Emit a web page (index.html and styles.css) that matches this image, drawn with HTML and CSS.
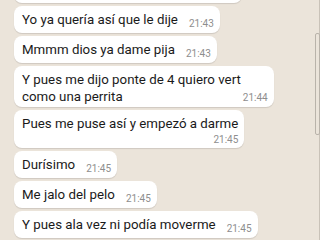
FILE: index.html
```html
<!DOCTYPE html>
<html lang="es">
<head>
    <meta charset="UTF-8">
    <meta name="viewport" content="width=device-width, initial-scale=1.0">
    <title>Chat</title>
    <link rel="stylesheet" href="styles.css">
</head>
<body>
    <div class="chat">
        <div class="bubble cut"></div>

        <div class="bubble">
            <span class="text">Yo ya quería así que le dije</span>
            <span class="time">21:43</span>
        </div>
        <div class="bubble">
            <span class="text">Mmmm dios ya dame pija</span>
            <span class="time">21:43</span>
        </div>
        <div class="bubble tight">
            <span class="text">Y pues me dijo ponte de 4 quiero vert<br>como una perrita</span>
            <span class="time">21:44</span>
        </div>
        <div class="bubble stack">
            <span class="text">Pues me puse así y empezó a darme</span>
            <span class="time">21:45</span>
        </div>
        <div class="bubble">
            <span class="text">Durísimo</span>
            <span class="time">21:45</span>
        </div>
        <div class="bubble">
            <span class="text">Me jalo del pelo</span>
            <span class="time">21:45</span>
        </div>
        <div class="bubble">
            <span class="text">Y pues ala vez ni podía moverme</span>
            <span class="time">21:45</span>
        </div>
    </div>

    <div class="scroll-thumb"></div>
</body>
</html>
```

FILE: styles.css
```css
html, body {
    height: 100%;
}
body {
    margin: 0;
    overflow: hidden;
    background-color: #ebe4da;
    font-family: Roboto, "Noto Sans", Arial, sans-serif;
    color: #1a1a1a;
    box-shadow: inset -1px 0 0 #c9c2b8;
}
.chat {
    display: flex;
    flex-direction: column;
    align-items: flex-start;
    gap: 3px;
    padding-left: 14px;
    margin-top: -24px;
}
.bubble {
    display: flex;
    align-items: flex-end;
    gap: 11px;
    background-color: #fff;
    border-radius: 8px;
    padding: 5px 6px 5px 8px;
    box-shadow: 0 1px 1px rgba(0, 0, 0, 0.12);
}
.bubble.cut {
    width: 214px;
    height: 17px;
}
.bubble.tight {
    gap: 2px;
    padding-bottom: 2px;
}
.bubble.stack {
    display: block;
    padding-bottom: 2px;
}
.text {
    font-size: 13.3px;
    line-height: 17px;
}
.time {
    font-size: 10px;
    line-height: 12px;
    color: #8e8e8e;
    margin-bottom: -2px;
    white-space: nowrap;
}
.tight .time {
    margin-bottom: 1px;
}
.stack .text {
    display: block;
}
.stack .time {
    display: block;
    text-align: right;
    margin: 2px 0 0;
}
.scroll-thumb {
    position: absolute;
    top: 33px;
    right: 0;
    width: 3px;
    height: 100px;
    border: 1px solid #b9b3aa;
    border-radius: 2px;
}
```
